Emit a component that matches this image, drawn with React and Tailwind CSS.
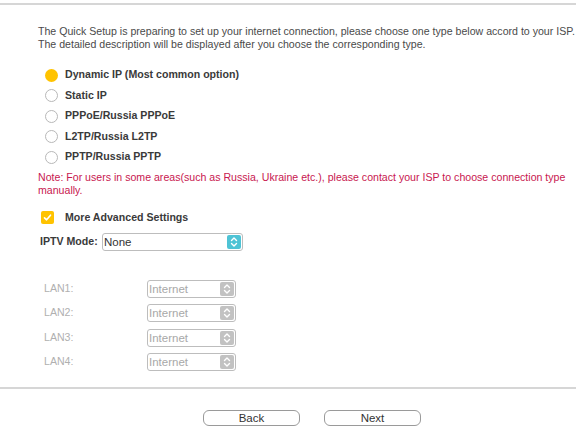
import React from "react";

function Chevrons({ color = "#fff" }) {
  return (
    <svg width="8" height="12" viewBox="0 0 8 12" fill="none">
      <path d="M1.5 4.5 L4 2 L6.5 4.5" stroke={color} strokeWidth="1.4" strokeLinecap="round" strokeLinejoin="round" />
      <path d="M1.5 7.5 L4 10 L6.5 7.5" stroke={color} strokeWidth="1.4" strokeLinecap="round" strokeLinejoin="round" />
    </svg>
  );
}

function Radio({ checked, label }) {
  return (
    <div className="flex h-[20.5px] items-center">
      {checked ? (
        <span className="block h-[13px] w-[13px] rounded-full bg-[#ffc300]" />
      ) : (
        <span className="block h-[13px] w-[13px] rounded-full border border-[#b8b8b8] bg-white" />
      )}
      <span className="ml-[7px] text-[10.6px] font-bold text-[#3a3a3a]">{label}</span>
    </div>
  );
}

function LanRow({ label }) {
  return (
    <div className="flex h-[18px] items-center">
      <span className="w-[147px] shrink-0 pl-[44px] text-[10.6px] text-[#b0b0b0]">{label}</span>
      <div className="flex h-[18px] w-[89px] items-stretch rounded-[3px] border border-[#bdbdbd] bg-white">
        <span className="flex-1 pl-[1px] text-[11.5px] leading-[17px] text-[#a8a8a8]">Internet</span>
        <span className="m-[1px] flex w-[14px] items-center justify-center rounded-[2px] bg-[#c2c2c2]">
          <Chevrons />
        </span>
      </div>
    </div>
  );
}

export default function App() {
  return (
    <div
      className="h-[428px] w-[576px] overflow-hidden bg-white"
      style={{ fontFamily: '"Liberation Sans", Arial, sans-serif' }}
    >
      <div className="mt-[3px] h-[2px] bg-[#d6d6d6]" />
      <div className="pl-[38px] pt-[20px] text-[10.6px] leading-[13px] text-[#4a4a4a] whitespace-nowrap">
        <div>The Quick Setup is preparing to set up your internet connection, please choose one type below accord to your ISP.</div>
        <div>The detailed description will be displayed after you choose the corresponding type.</div>
      </div>
      <div className="mt-[14px] pl-[45px]">
        <Radio checked label="Dynamic IP (Most common option)" />
        <Radio label="Static IP" />
        <Radio label="PPPoE/Russia PPPoE" />
        <Radio label="L2TP/Russia L2TP" />
        <Radio label="PPTP/Russia PPTP" />
      </div>
      <div className="mt-[3px] pl-[38px] pr-[4px] text-[10.6px] leading-[13px] text-[#c8174f]">
        Note: For users in some areas(such as Russia, Ukraine etc.), please contact your ISP to choose connection type manually.
      </div>
      <div className="mt-[11px] flex h-[20px] items-center pl-[41px]">
        <span className="flex h-[13px] w-[13px] items-center justify-center rounded-[2px] bg-[#ffc300]">
          <svg width="9" height="9" viewBox="0 0 9 9" fill="none">
            <path d="M1.5 4.8 L3.6 6.8 L7.5 2.2" stroke="#fff" strokeWidth="1.6" strokeLinecap="round" strokeLinejoin="round" />
          </svg>
        </span>
        <span className="ml-[11px] text-[10.6px] font-bold text-[#3a3a3a]">More Advanced Settings</span>
      </div>
      <div className="mt-[5px] flex h-[18px] items-center pl-[40px]">
        <span className="w-[62px] shrink-0 text-[10.6px] font-bold text-[#3a3a3a]">IPTV Mode:</span>
        <div className="flex h-[18px] w-[141px] items-stretch rounded-[3px] border border-[#bdbdbd] bg-white">
          <span className="flex-1 pl-[1px] text-[11.5px] leading-[17px] text-[#333]">None</span>
          <span className="m-[1px] flex w-[14px] items-center justify-center rounded-[2px] bg-[#4ec3d5]">
            <Chevrons />
          </span>
        </div>
      </div>
      <div className="mt-[29px] flex flex-col gap-[6.5px]">
        <LanRow label="LAN1:" />
        <LanRow label="LAN2:" />
        <LanRow label="LAN3:" />
        <LanRow label="LAN4:" />
      </div>
      <div className="mt-[16px] h-[2px] bg-[#d6d6d6]" />
      <div className="mt-[21px] flex gap-[24px] pl-[203px]">
        <button className="h-[16px] w-[97px] rounded-[6px] border border-[#9a9a9a] bg-white text-[11.5px] leading-[14px] text-[#333]">
          Back
        </button>
        <button className="h-[16px] w-[97px] rounded-[6px] border border-[#9a9a9a] bg-white text-[11.5px] leading-[14px] text-[#333]">
          Next
        </button>
      </div>
    </div>
  );
}
